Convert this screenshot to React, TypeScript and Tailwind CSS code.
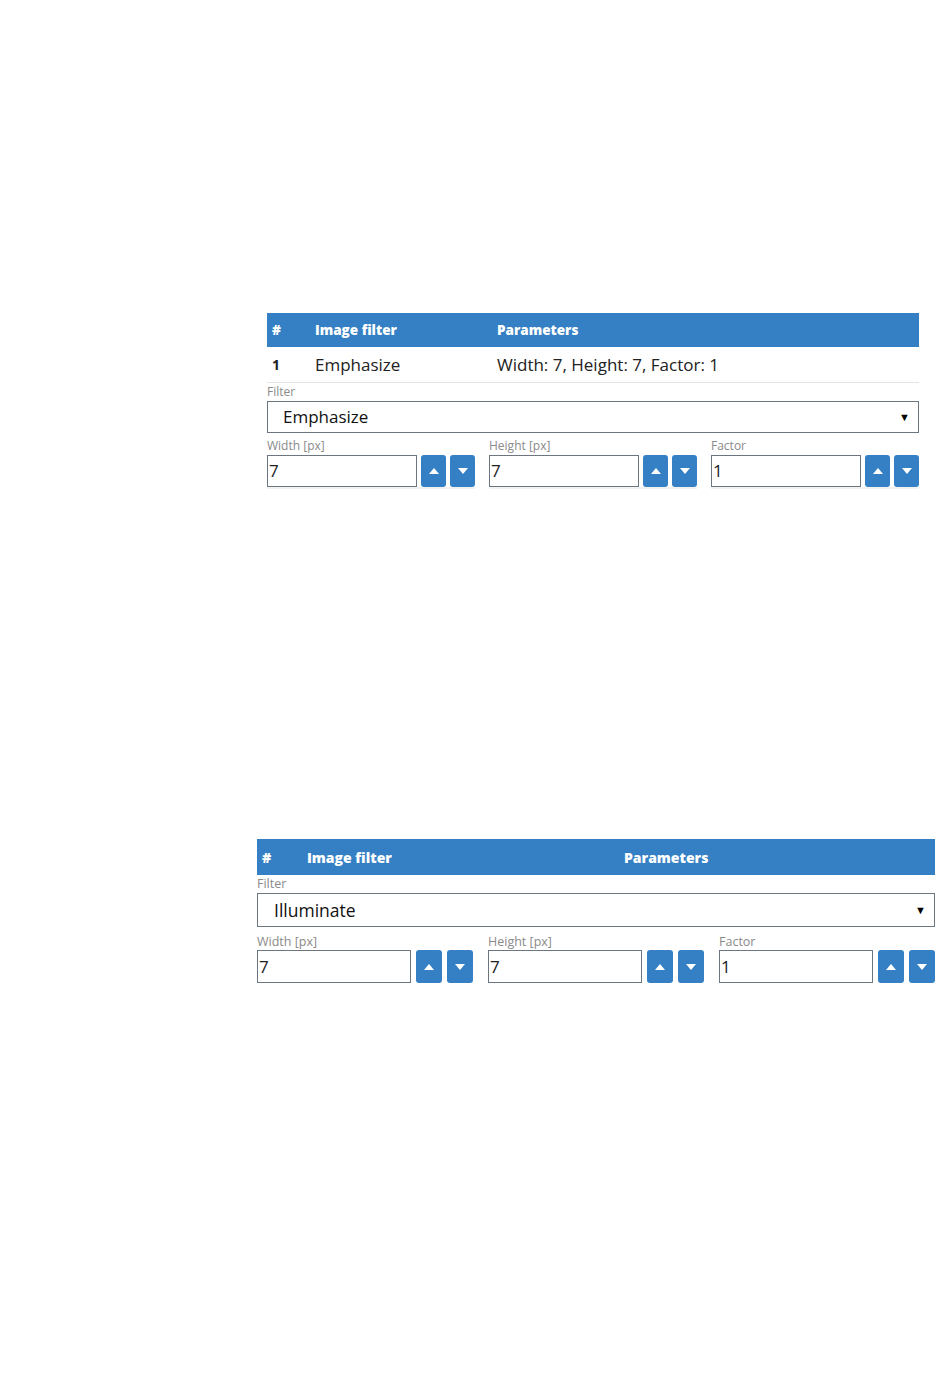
import { ReactNode } from "react"

const font = { fontFamily: '"Open Sans", "Liberation Sans", sans-serif' }

function Caret({ up }: { up?: boolean }) {
  return (
    <svg width="10" height="6" viewBox="0 0 10 6" className="fill-white">
      {up ? <polygon points="0,6 10,6 5,0" /> : <polygon points="0,0 10,0 5,6" />}
    </svg>
  )
}

function SpinButton({ up, big }: { up?: boolean; big?: boolean }) {
  return (
    <button
      className={
        big
          ? "w-[26px] h-full rounded-[3px] bg-[#3580c4] flex items-center justify-center shrink-0"
          : "w-[25px] h-full rounded-[3px] bg-[#3580c4] flex items-center justify-center shrink-0"
      }
    >
      <Caret up={up} />
    </button>
  )
}

function NumberField({ label, value, big }: { label: string; value: string; big?: boolean }) {
  return (
    <div className="flex-1 flex flex-col">
      <span className={big ? "text-[12.5px] leading-[17px] text-[#8a8a8a]" : "text-[12px] leading-[18px] text-[#8a8a8a]"}>{label}</span>
      <div className={big ? "flex h-[33px] gap-[5px]" : "flex h-[32px] gap-[4px]"}>
        <div className="flex-1 border border-[#6b7680] flex items-center text-[17px] text-[#222] pl-[1px]">{value}</div>
        <SpinButton up big={big} />
        <SpinButton big={big} />
      </div>
      {!big && <div className="h-[2px] bg-[#f2f2f2]" />}
    </div>
  )
}

function Header({ big, secondCol }: { big?: boolean; secondCol: string }) {
  return (
    <div
      className={
        big
          ? "flex items-center h-[36px] bg-[#3580c4] text-white font-extrabold text-[14px]"
          : "flex items-center h-[34px] bg-[#3580c4] text-white font-extrabold text-[13.5px]"
      }
    >
      <span className={big ? "w-[50px] pl-[5px]" : "w-[48px] pl-[5px]"}>#</span>
      <span className={secondCol}>Image filter</span>
      <span>Parameters</span>
    </div>
  )
}

function Editor({ filter, big }: { filter: string; big?: boolean }) {
  return (
    <>
      <span className={big ? "block text-[12.5px] leading-[18px] text-[#8a8a8a]" : "block text-[12px] leading-[18px] text-[#8a8a8a]"}>
        Filter
      </span>
      <div
        className={
          big
            ? "h-[34px] border-[1.5px] border-[#6b7680] flex items-center justify-between pl-[16px] pr-[8px] text-[17.5px] text-[#111]"
            : "h-[32px] border-[1.5px] border-[#6b7680] flex items-center justify-between pl-[15px] pr-[8px] text-[17px] text-[#111]"
        }
      >
        <span>{filter}</span>
        <span className="text-[11px] text-black">▼</span>
      </div>
      <div className={big ? "flex gap-[15px] mt-[6px]" : "flex gap-[14px] mt-[4px]"}>
        <NumberField label="Width [px]" value="7" big={big} />
        <NumberField label="Height [px]" value="7" big={big} />
        <NumberField label="Factor" value="1" big={big} />
      </div>
    </>
  )
}

function Panel({ className, children }: { className: string; children: ReactNode }) {
  return <div className={className}>{children}</div>
}

export default function App() {
  return (
    <div className="w-[950px] h-[1397px] bg-white text-[#222]" style={font}>
      <Panel className="ml-[267px] w-[652px] pt-[313px]">
        <Header secondCol="w-[182px]" />
        <div className="flex items-center h-[36px] border-b border-[#e4e4e4]">
          <span className="w-[48px] pl-[5px] font-bold text-[14px]">1</span>
          <span className="w-[182px] text-[17px]">Emphasize</span>
          <span className="text-[17px]">Width: 7, Height: 7, Factor: 1</span>
        </div>
        <Editor filter="Emphasize" />
      </Panel>
      <Panel className="ml-[257px] w-[678px] mt-[350px]">
        <Header big secondCol="w-[317px]" />
        <Editor big filter="Illuminate" />
      </Panel>
    </div>
  )
}
